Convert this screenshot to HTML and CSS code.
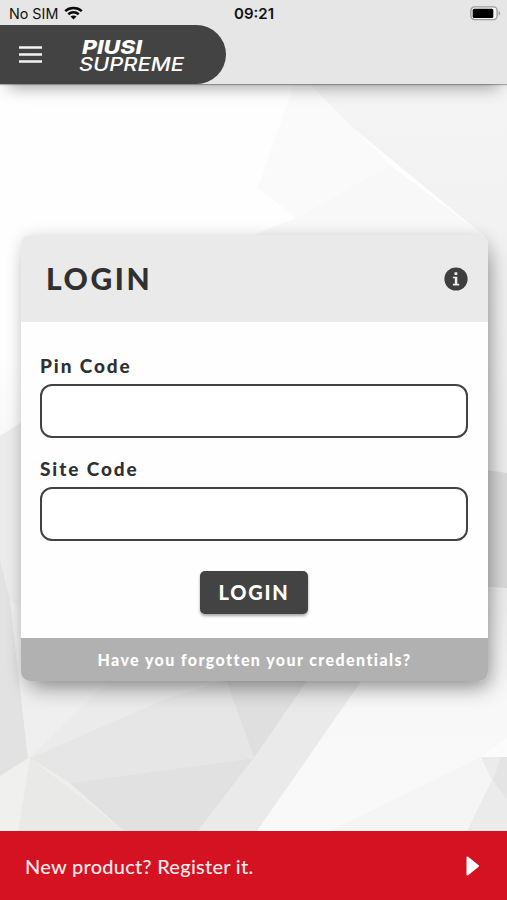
FILE: index.html
```
<!DOCTYPE html>
<html lang="en">
<head>
    <meta charset="UTF-8">
    <meta name="viewport" content="width=device-width, initial-scale=1.0">
    <title>Piusi Supreme - Login</title>
    <link rel="stylesheet" href="styles.css">
</head>
<body>
    <svg class="backdrop" viewBox="0 0 507 900" preserveAspectRatio="none" aria-hidden="true">
        <defs>
            <linearGradient id="base" x1="0" y1="0" x2="0" y2="1">
                <stop offset="0.4" stop-color="#fefefe"/>
                <stop offset="0.6" stop-color="#f0f0f0"/>
                <stop offset="1" stop-color="#ededec"/>
            </linearGradient>
            <linearGradient id="side" x1="0" y1="0" x2="0" y2="1">
                <stop offset="0" stop-color="#f4f4f4"/>
                <stop offset="1" stop-color="#ededed"/>
            </linearGradient>
            <linearGradient id="low" x1="0" y1="0" x2="0" y2="1">
                <stop offset="0" stop-color="#ececec"/>
                <stop offset="0.45" stop-color="#f8f8f8"/>
                <stop offset="1" stop-color="#f9f9f9"/>
            </linearGradient>
        </defs>
        <rect width="507" height="900" fill="url(#base)"/>
        <polygon points="300,84 507,84 507,480 450,480 484,236" fill="url(#side)"/>
        <polygon points="294,84 310,84 390,165 296,218 258,188" fill="#fafafa"/>
        <polygon points="390,165 484,236 250,236 296,218" fill="#f8f8f8"/>
        <polygon points="0,436 22,422 22,700 0,700" fill="#ebebeb"/>
        <polygon points="0,560 10,600 28,758 0,776" fill="#e2e2e2"/>
        <polygon points="10,600 120,680 28,758" fill="#efefef"/>
        <polygon points="30,758 165,699 226,680 254,758 70,783" fill="#e6e6e6"/>
        <polygon points="110,680 226,680 165,699 30,758" fill="#ebebeb"/>
        <polygon points="226,680 308,680 254,758" fill="#dfdfdf"/>
        <polygon points="70,783 254,758 198,831 124,831" fill="#e1e1e1"/>
        <polygon points="30,758 124,831 18,831" fill="#e9e9e8"/>
        <polygon points="0,776 30,758 18,831 0,831" fill="#f0f0ef"/>
        <polygon points="308,680 362,680 257,831 198,831 254,758" fill="#eaeaea"/>
        <polygon points="426,588 507,588 507,831 257,831" fill="url(#low)"/>
        <polygon points="481,757 330,831 507,831 507,738" fill="#f5f5f5"/>
        <polygon points="481,757 507,738 507,757" fill="#fcfcfc"/>
        <polygon points="481,757 507,757 507,831 467,831 492,780" fill="#ebebeb"/>
        <polygon points="501,757 507,757 507,800 493,780" fill="#e4e4e4"/>
        <polygon points="470,466 487,470 507,473 507,588 470,586" fill="#dadada"/>
    </svg>

    <div class="app">
        <div class="status-bar">
            <div class="carrier">
                <span>No SIM</span>
                <svg class="wifi" width="19" height="14" viewBox="0 0 19 14">
                    <g fill="none" stroke="#0a0a0a" stroke-width="2.5">
                        <path d="M1.2 5.1C5.8.9 13.2.9 17.8 5.1"/>
                        <path d="M4.3 8.3C7.2 5.7 11.8 5.7 14.7 8.3"/>
                    </g>
                    <path d="M6.5 10.5C8.2 9 10.8 9 12.5 10.5L9.5 13.5Z" fill="#0a0a0a"/>
                </svg>
            </div>
            <span class="clock">09:21</span>
            <svg class="battery" width="31" height="15" viewBox="0 0 31 15">
                <rect x=".9" y=".9" width="26.2" height="12.7" rx="3.5" fill="#f4f4f4" stroke="#9d9d9d" stroke-width="1.4"/>
                <rect x="2.7" y="2.7" width="20.6" height="9.2" rx="1.5" fill="#000"/>
                <path d="M28.6 5v4.5c2.2-.8 2.2-3.7 0-4.5z" fill="#9d9d9d"/>
            </svg>
        </div>

        <header class="header">
            <div class="brand">
                <svg class="menu-icon" width="23" height="17" viewBox="0 0 23 17">
                    <path d="M0 1.5h23M0 8.5h23M0 15.5h23" stroke="#f4f4f4" stroke-width="2.6"/>
                </svg>
                <svg class="logo" width="108" height="46" viewBox="0 0 108 46">
                    <text class="logo-top" x="3" y="21.5" textLength="60" lengthAdjust="spacingAndGlyphs">PIUSI</text>
                    <text class="logo-bottom" x="0" y="38.5" textLength="105" lengthAdjust="spacingAndGlyphs">SUPREME</text>
                </svg>
            </div>
        </header>

        <main class="content">
            <form class="card">
                <div class="card-header">
                    <h1>LOGIN</h1>
                    <svg class="info-icon" width="24" height="24" viewBox="0 0 24 24">
                        <circle cx="12" cy="12" r="11.6" fill="#3e3e3e"/>
                        <path d="M10.5 5.3h2.8v2.7h-2.8zM8.9 9.7h4.4v7.1h1.9v1.6H8.9v-1.6h1.9v-5.5H8.9z" fill="#ededed"/>
                    </svg>
                </div>
                <div class="card-body">
                    <label for="pin">Pin Code</label>
                    <input type="text" id="pin">
                    <label for="site">Site Code</label>
                    <input type="text" id="site">
                    <button type="button" class="login-btn">LOGIN</button>
                </div>
                <a class="card-footer">Have you forgotten your credentials?</a>
            </form>
        </main>

        <footer class="register">
            <span>New product? Register it.</span>
            <svg width="14" height="20" viewBox="0 0 14 20">
                <path d="M1.5 1.5v17L12 10z" fill="#fff" stroke="#fff" stroke-width="2" stroke-linejoin="round"/>
            </svg>
        </footer>
    </div>
</body>
</html>
```

FILE: styles.css
```
* {
    margin: 0;
    padding: 0;
    box-sizing: border-box;
}

body {
    font-family: Lato, 'Liberation Sans', sans-serif;
    color: #303030;
    overflow: hidden;
}

.backdrop {
    position: absolute;
    top: 0;
    left: 0;
    width: 100%;
    height: 100vh;
    z-index: -1;
}

.app {
    height: 100vh;
    display: flex;
    flex-direction: column;
}

.status-bar {
    height: 25px;
    padding: 2px 6px 0 9px;
    display: grid;
    grid-template-columns: 1fr auto 1fr;
    align-items: center;
    background: #e6e6e6;
    font-family: Inter, sans-serif;
    font-size: 14.3px;
    color: #111;
}

.carrier {
    display: flex;
    align-items: center;
    gap: 6px;
}

.wifi {
    margin-top: -2px;
}

.clock {
    margin-right: 2px;
    font-weight: 600;
    font-size: 15px;
}

.battery {
    justify-self: end;
    margin-top: -1px;
}

.header {
    height: 59px;
    background: #e6e6e6;
    box-shadow: 0 1px 1px rgba(0,0,0,0.28), 0 12px 16px -8px rgba(0,0,0,0.34);
}

.brand {
    width: 226px;
    height: 59px;
    padding-left: 19px;
    display: flex;
    align-items: center;
    gap: 37px;
    background: #434343;
    border-radius: 0 30px 30px 0;
}

.logo {
    overflow: visible;
}

.logo text {
    fill: #fff;
    font-family: Inter, sans-serif;
    font-style: italic;
}

.logo-top {
    font-size: 19px;
    font-weight: 800;
}

.logo-bottom {
    font-size: 18px;
    font-weight: 500;
}

.content {
    flex: 1;
    padding: 151px 20px 0 21px;
}

.card {
    width: 467px;
    height: 446px;
    display: flex;
    flex-direction: column;
    border-radius: 9px;
    box-shadow: 0 0 16px rgba(0,0,0,0.1), 5px 11px 22px -5px rgba(0,0,0,0.4);
}

.card-header {
    height: 87px;
    padding: 0 20px 0 25px;
    display: flex;
    align-items: center;
    justify-content: space-between;
    background: #eaeaea;
    border-radius: 9px 9px 0 0;
}

.card-header h1 {
    margin-top: -2px;
    font-size: 30px;
    font-weight: 900;
    letter-spacing: 2.6px;
}

.card-body {
    flex: 1;
    padding: 32px 20px 0 19px;
    display: flex;
    flex-direction: column;
    background: #fefefe;
}

.card-body label {
    height: 24px;
    margin-bottom: 6px;
    font-size: 19px;
    line-height: 24px;
    font-weight: 900;
    letter-spacing: 1.9px;
}

.card-body input {
    height: 54px;
    margin-bottom: 19px;
    padding: 0 14px;
    border: 2px solid #424242;
    border-radius: 12px;
    background: #fff;
    font: inherit;
}

.login-btn {
    width: 108px;
    height: 43px;
    margin-top: 11px;
    padding-bottom: 2px;
    align-self: center;
    border: none;
    border-radius: 5px;
    background: #434343;
    color: #fff;
    font-family: inherit;
    font-size: 20px;
    font-weight: 900;
    letter-spacing: 1.8px;
    box-shadow: 0 2px 3px rgba(0,0,0,0.35);
}

.card-footer {
    height: 43px;
    line-height: 44px;
    text-align: center;
    background: #b1b1b1;
    border-radius: 0 0 9px 9px;
    color: #fff;
    font-size: 16px;
    font-weight: 900;
    letter-spacing: 1.4px;
}

.register {
    height: 69px;
    padding: 1px 27px 0 25px;
    display: flex;
    align-items: center;
    justify-content: space-between;
    background: #d51221;
    color: #fbe9ea;
    font-size: 20px;
    font-weight: 500;
    letter-spacing: 0.26px;
}
```
